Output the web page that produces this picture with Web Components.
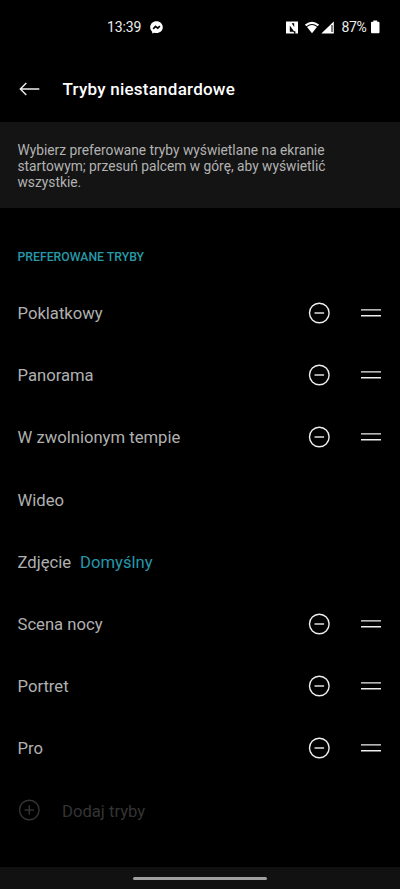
<!DOCTYPE html>
<html lang="pl">
<head>
<meta charset="utf-8">
<title>Tryby niestandardowe</title>
<style>
html,body{margin:0;background:#000}
body{font-family:Roboto,"Noto Sans",sans-serif;width:400px;height:889px;overflow:hidden}
</style>
</head>
<body>
<modes-screen></modes-screen>
<script>
const define = (name, html) => customElements.define(name, class extends HTMLElement {
  constructor() {
    super();
    this.attachShadow({mode: 'open'}).innerHTML = html;
  }
});

define('status-bar', `
<style>
:host{display:flex;align-items:center;height:54px;box-sizing:border-box;padding:0 20.5px 0 107px;color:#ececec;font-size:14px;line-height:16px}
svg{display:block;flex:none}
.time{width:42.5px;letter-spacing:-.1px}
.gap{flex:1}
.nfc{margin-right:7.5px}.wifi{margin-right:2px}.signal{margin-right:7.5px}
.pct{width:29.5px;letter-spacing:-.4px;white-space:nowrap}
</style>
<span class="time">13:39</span>
<svg width="13" height="13" viewBox="0 0 13 13"><path fill="#fff" d="M6.5.3C2.9.3.2 2.9.2 6.3c0 1.8.7 3.3 2 4.4v1.9l2-.8c.7.2 1.5.3 2.3.3 3.6 0 6.3-2.5 6.3-5.8S10.1.3 6.5.3z"/><path d="M3.2 7.9l2.3-2.5 2.2 1.7 2.2-2" fill="none" stroke="#000" stroke-width="1.6"/></svg>
<span class="gap"></span>
<svg class="nfc" width="12" height="13" viewBox="0 0 12 13"><path fill="#fff" d="M0 .5h2.600v12H0zM9.400.5H12v12H9.400zM2.600.5h1.800l3.800 5.600V2.200H4.800V.5h4.600v9.700H8L3.800 4.500v6.300h3.500l1.300 1.700h-6z"/></svg>
<svg class="wifi" width="14" height="13" viewBox="0 0 14 13"><path d="M.6 4.500Q7-.8 13.400 4.500" fill="none" stroke="#fff" stroke-width="2.200"/><path fill="#fff" d="M2 5.900q5-4 10 0L7 12.200z"/></svg>
<svg class="signal" width="13" height="13" viewBox="0 0 13 13"><path fill="#fff" d="M12.800.5v12H.3z"/><path d="M11 4v7" stroke="#000" stroke-width="1"/></svg>
<span class="pct">87%</span>
<svg width="8.5" height="14" viewBox="0 0 9 14"><path fill="#fff" d="M2.500 0h4v1.500H8q1 0 1 1v10q0 1-1 1H1q-1 0-1-1v-10q0-1 1-1h1.500z"/></svg>
`);

define('app-header', `
<style>
:host{display:flex;align-items:center;height:68px;box-sizing:border-box;padding:2px 0 0 19px;color:#fff}
svg{display:block;width:21px;margin-right:22.5px}
h1{margin:0;font-size:17px;letter-spacing:.24px;line-height:22px;font-weight:500;white-space:nowrap}
</style>
<svg height="14" viewBox="0 0 21 14"><path d="M20.300 7H1.500M7.300 1L1.300 7l6 6" fill="none" stroke="#eee" stroke-width="1.400"/></svg>
<h1><slot></slot></h1>
`);

define('info-banner', `
<style>
:host{display:block;height:86px;box-sizing:border-box;background:#141414;padding:20px 17.5px 0;color:#b2b2b2;font-size:13.78px;line-height:16px;white-space:nowrap}
</style>
<slot></slot>
`);

define('section-title', `
<style>
:host{display:block;height:73.8px;box-sizing:border-box;padding:41px 17.5px 0;color:#269aa8;font-size:12.25px;line-height:16px;font-weight:500;white-space:nowrap}
</style>
<slot></slot>
`);

define('circle-icon', `
<style>
:host{display:block;width:22px;height:22px;color:#eee}
svg{display:block}
.v{display:none}
:host([plus]) .v{display:inline}
:host([plus]){color:#343434}
</style>
<svg width="22" height="22" viewBox="0 0 22 22" fill="none" stroke="currentColor" stroke-width="1.400"><circle cx="11.300" cy="11" r="9.800"/><path d="M6.500 11h9.600"/><path class="v" d="M11.300 6.200v9.600"/></svg>
`);

define('mode-row', `
<style>
:host{display:flex;align-items:center;height:62.2px;box-sizing:border-box;padding:0 19px 0 17.5px;color:#b0b0b0;font-size:16.65px;line-height:20px;white-space:nowrap}
.label{flex:1;padding-top:2.4px}
.controls{display:flex;align-items:center;gap:31px}
:host([fixed]) .controls{display:none}
::slotted(b){color:#2498aa;font-weight:400;margin-left:9px}
svg{display:block}
</style>
<span class="label"><slot></slot></span>
<span class="controls"><circle-icon></circle-icon><svg width="20" height="12" viewBox="0 0 20 12"><path d="M0 2.900h20M0 8.700h20" stroke="#eee" stroke-width="1.400"/></svg></span>
`);

define('add-row', `
<style>
:host{display:flex;align-items:center;height:62.2px;padding-left:18px;color:#343434;font-size:16.65px;line-height:20px;white-space:nowrap}
span{margin-left:22px;padding-top:2.4px}
</style>
<circle-icon plus></circle-icon><span><slot></slot></span>
`);

define('nav-bar', `
<style>
:host{display:flex;justify-content:center;height:22px;box-sizing:border-box;padding-top:10px;background:#111}
i{display:block;width:134px;height:3px;border-radius:2px;background:#a0a0a0}
</style>
<i></i>
`);

define('modes-screen', `
<style>
:host{display:flex;flex-direction:column;width:400px;height:889px;background:#000;overflow:hidden}
main{flex:1}
</style>
<status-bar></status-bar>
<app-header>Tryby niestandardowe</app-header>
<info-banner>Wybierz preferowane tryby wyświetlane na ekranie<br>startowym; przesuń palcem w górę, aby wyświetlić<br>wszystkie.</info-banner>
<main>
<section-title>PREFEROWANE TRYBY</section-title>
<mode-row>Poklatkowy</mode-row>
<mode-row>Panorama</mode-row>
<mode-row>W zwolnionym tempie</mode-row>
<mode-row fixed>Wideo</mode-row>
<mode-row fixed>Zdjęcie<b>Domyślny</b></mode-row>
<mode-row>Scena nocy</mode-row>
<mode-row>Portret</mode-row>
<mode-row>Pro</mode-row>
<add-row>Dodaj tryby</add-row>
</main>
<nav-bar></nav-bar>
`);
</script>
</body>
</html>
